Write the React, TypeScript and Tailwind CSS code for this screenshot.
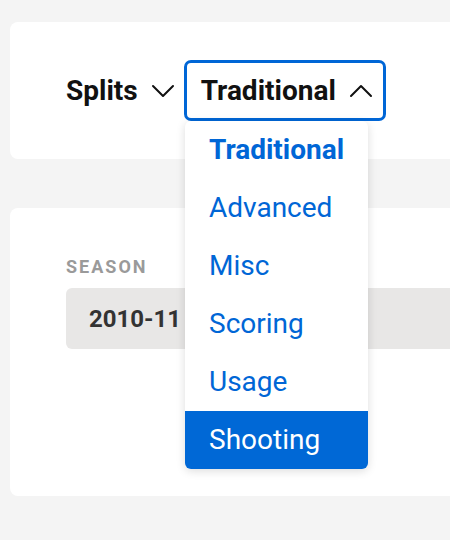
import React from "react";

const Chevron = ({ up }: { up?: boolean }) => (
  <svg width="24" height="14" viewBox="0 0 24 14" fill="none" stroke="#111" strokeWidth="2" strokeLinecap="round" strokeLinejoin="round">
    {up ? <path d="M2 12 L12 2 L22 12" /> : <path d="M2 2 L12 12 L22 2" />}
  </svg>
);

export default function App() {
  const items = ["Traditional", "Advanced", "Misc", "Scoring", "Usage", "Shooting"];
  return (
    <div className="relative w-[450px] h-[540px] overflow-hidden bg-[#f4f4f4] font-['Roboto',sans-serif]">
      <div className="flex flex-col gap-[49px] pt-[22px] pl-[10px]">
        <div className="w-[520px] h-[137px] rounded-lg bg-white flex items-center pl-[56px]">
          <div className="flex items-center gap-[13px] text-[28px] font-bold text-[#111]">
            <span>Splits</span>
            <Chevron />
          </div>
          <div className="ml-[9px] h-[61px] w-[202px] rounded-[7px] border-[3px] border-[#0066d6] flex items-center pl-[14px] gap-[13px] text-[28px] font-bold text-[#111]">
            <span>Traditional</span>
            <Chevron up />
          </div>
        </div>
        <div className="relative w-[520px] h-[288px] rounded-lg bg-white pt-[50px] pl-[56px]">
          <div className="text-[18px] font-bold tracking-[2px] text-[#9a9a9a] leading-none">SEASON</div>
          <div className="mt-[12px] h-[61px] rounded-md bg-[#e8e7e6] flex items-center pl-[23px] text-[24px] font-bold text-[#333]">
            2010-11
          </div>
        </div>
      </div>
      <div className="absolute left-[185px] top-[121px] w-[183px] rounded-md bg-white shadow-[0_2px_10px_rgba(0,0,0,0.14)] overflow-hidden">
        {items.map((it, i) => (
          <div
            key={it}
            className={
              i === 0
                ? "h-[58px] flex items-center pl-[24px] text-[28px] font-bold text-[#0066d6]"
                : i === 5
                ? "h-[58px] flex items-center pl-[24px] text-[28px] text-white bg-[#0068d6]"
                : "h-[58px] flex items-center pl-[24px] text-[28px] text-[#0066d6]"
            }
          >
            {it}
          </div>
        ))}
      </div>
    </div>
  );
}
